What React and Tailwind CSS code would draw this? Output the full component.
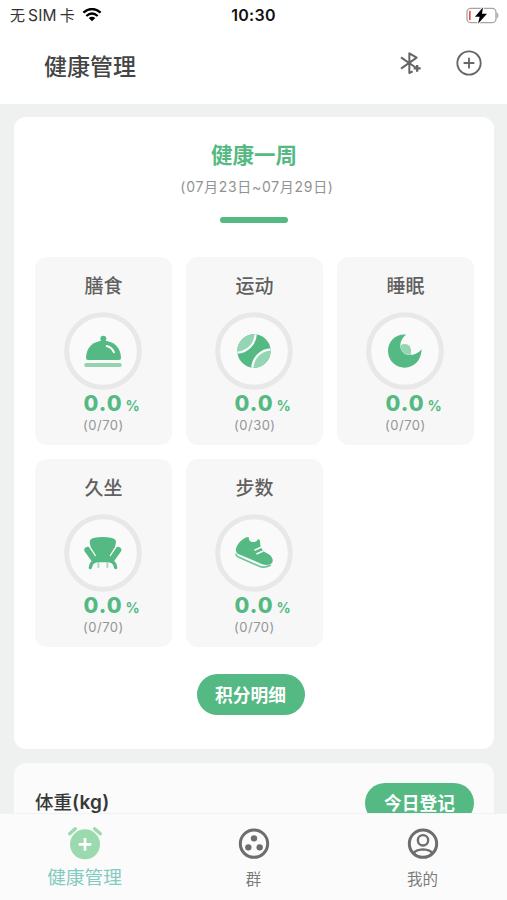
import { CirclePlus } from 'lucide-react';

const MealIcon = () => (
  <>
    <circle cx="118" cy="80" r="9" fill="#54b982" />
    <path d="M66 138 C66 105 90 86 118 86 C147 86 171 105 171 138 Q171 144 165 144 H72 Q66 144 66 138Z" fill="#54b982" />
    <path d="M128 102 Q144 106 150 121" fill="none" stroke="#fff" strokeWidth="6" strokeLinecap="round" />
    <rect x="61" y="153" width="112" height="12" rx="5" fill="#93d3af" />
  </>
);

const BallIcon = () => (
  <>
    <clipPath id="ball">
      <circle cx="117" cy="117" r="50" />
    </clipPath>
    <g clipPath="url(#ball)">
      <rect x="60" y="60" width="114" height="114" fill="#54b982" />
      <circle cx="64" cy="64" r="58" fill="#93d6b3" stroke="#fafafa" strokeWidth="7" />
      <circle cx="170" cy="170" r="58" fill="#93d6b3" stroke="#fafafa" strokeWidth="7" />
    </g>
  </>
);

const MoonIcon = () => (
  <>
    <path d="M120 68 C88 66 66 88 66 117 C66 147 90 167 116 167 C144 167 165 147 167 112 C153 130 125 135 112 122 C98 108 100 84 120 68Z" fill="#54b982" />
    <path d="M103 100 Q120 91 131 102 Q138 113 134 129 Q120 130 111 121 Q103 112 103 100Z" fill="#93d6b3" />
  </>
);

const ChairIcon = () => (
  <>
    <path d="M103 147 V160 M130 147 V160" stroke="#a9dcc0" strokeWidth="6" strokeLinecap="round" />
    <path d="M77 84 Q77 75 88 72 Q116 66 144 72 Q156 75 156 84 Q154 100 142 126 L148 138 Q146 145 138 145 H95 Q86 145 85 137 L93 126 Q79 104 77 84Z" fill="#54b982" />
    <path d="M70 108 L90 136 M163 108 L143 136" stroke="#54b982" strokeWidth="18" strokeLinecap="round" />
    <path d="M81 104 L94 125 M152 104 L139 125" stroke="#fafafa" strokeWidth="3.5" strokeLinecap="round" />
    <path d="M79 161 Q81 144 95 141 M155 161 Q153 144 139 141" fill="none" stroke="#54b982" strokeWidth="10" strokeLinecap="round" />
  </>
);

const ShoeIcon = () => (
  <>
    <path d="M85 75 Q94 68 101 69 Q101 83 111 84 Q125 86 129 76 L134 77 Q136 86 136 95 Q142 111 153 116 Q171 124 173 137 Q174 148 167 150 Q155 156 142 151 L68 119 Q61 114 63 104 Q68 86 85 75Z" fill="#54b982" />
    <path d="M120 108 L138 100 M126 119 L143 112" stroke="#fafafa" strokeWidth="5" strokeLinecap="round" />
    <path d="M63 121 Q64 126 70 129 L133 157 Q148 163 166 154" fill="none" stroke="#6cc595" strokeWidth="5" strokeLinecap="round" />
  </>
);

const tiles = [
  { title: '膳食', score: '(0/70)', Icon: MealIcon },
  { title: '运动', score: '(0/30)', Icon: BallIcon },
  { title: '睡眠', score: '(0/70)', Icon: MoonIcon },
  { title: '久坐', score: '(0/70)', Icon: ChairIcon },
  { title: '步数', score: '(0/70)', Icon: ShoeIcon },
];

const Tile = ({ title, score, Icon }) => (
  <div className="h-[188px] rounded-xl bg-[#f7f7f7] pt-4">
    <h3 className="pl-px text-center text-[19px] leading-7 font-medium text-[#606060]">{title}</h3>
    <svg viewBox="0 0 234 234" className="mx-auto mt-[11px] size-[78px]">
      <circle cx="117" cy="117" r="109" fill="#fafafa" stroke="#e8e8e8" strokeWidth="15" />
      <Icon />
    </svg>
    <div className="mt-[3px] flex items-baseline gap-[3px] pl-[49px] leading-5 text-[#54b982]">
      <span className="text-[21.5px] leading-5 font-extrabold tracking-[1px]">0.0</span>
      <span className="text-[14px] leading-5 font-bold">%</span>
    </div>
    <p className="pl-[48.5px] text-[13px] leading-[18px] tracking-[0.5px] text-[#959595]">{score}</p>
  </div>
);

const StatusBar = () => (
  <div className="flex h-[30px] items-center justify-between pr-[8px] pl-[10px] text-[#111]">
    <div className="flex w-[120px] items-center gap-[7px]">
      <span className="flex items-center gap-[3px] pt-px text-[15px] leading-5 whitespace-nowrap text-[#333]">
        无<span className="text-[15.5px] tracking-[0.2px]">SIM</span>卡
      </span>
      <svg viewBox="0 0 60 42" className="h-[14px] w-5">
        <path d="M30 40 L20 30 Q30 22 40 30Z" fill="#000" />
        <path d="M13 24 Q30 9 47 24 M4 14 Q30 -8 56 14" fill="none" stroke="#000" strokeWidth="7" />
      </svg>
    </div>
    <span className="mr-[2px] text-[16px] font-semibold tracking-[0.3px]">10:30</span>
    <div className="flex w-[120px] justify-end">
      <svg viewBox="0 0 99 51" className="h-[17px] w-[33px]">
        <rect x="3" y="4" width="87" height="43" rx="12" fill="none" stroke="#a5a5a5" strokeWidth="4" />
        <path d="M94 18 Q99 25 94 33Z" fill="#a5a5a5" stroke="#a5a5a5" strokeWidth="2" />
        <rect x="9" y="11" width="5" height="29" rx="2" fill="#ee5146" />
        <path d="M51 1 L27 29 H41 L36 50 L63 20 H48Z" fill="#000" stroke="#fff" strokeWidth="6" paintOrder="stroke" />
      </svg>
    </div>
  </div>
);

const NavItem = ({ label, children }) => (
  <div className="flex flex-1 flex-col items-center pt-3">
    <svg viewBox="0 0 108 102" className="h-[34px] w-9">{children}</svg>
    <span className="mt-2 text-[15.5px] leading-6 text-[#7b7b7b]">{label}</span>
  </div>
);

export default function App() {
  return (
    <div className="flex h-[900px] w-[507px] flex-col overflow-hidden bg-[#eff1f0] font-['Inter','Noto_Sans_CJK_SC',sans-serif]">
      <header className="h-[104px] shrink-0 bg-white">
        <StatusBar />
        <div className="flex items-center justify-between pr-[25px] pl-[44px]">
          <h1 className="mt-[19px] text-[23px] leading-9 font-medium text-[#444]">健康管理</h1>
          <div className="mt-[10px] flex items-center gap-[33px] text-[#666]">
            <svg viewBox="0 0 69 72" className="h-6 w-[23px]" fill="none" stroke="currentColor" strokeWidth="6">
              <path d="M6 19 L52 51 M6 53 L53 20 L31 7 V66 L41 61" strokeLinejoin="round" />
              <path d="M44 52 H65 M54.5 42 V62" strokeWidth="7" />
            </svg>
            <CirclePlus className="-mr-[1px] size-7" strokeWidth={1.6} />
          </div>
        </div>
      </header>

      <main className="min-h-0 flex-1 overflow-hidden px-[14px] pt-[13px]">
        <section className="h-[632px] w-[480px] rounded-xl bg-white px-[21px] pt-[22px]">
          <h2 className="text-center text-[21.5px] leading-8 font-bold text-[#54b982]">健康一周</h2>
          <p className="mt-[6px] pl-[6px] text-center text-[14px] leading-5 tracking-[0.7px] text-[#929292]">(07月23日~07月29日)</p>
          <div className="mx-auto mt-5 h-[6px] w-[68px] rounded-full bg-[#54b982]" />
          <div className="mt-[34px] grid grid-cols-[137px_137px_137px] gap-x-[14px] gap-y-[14px] -ml-[0.5px]">
            {tiles.map((tile) => (
              <Tile key={tile.title} {...tile} />
            ))}
          </div>
          <div className="mt-[27px] flex justify-center pr-[7px]">
            <button className="h-[41px] w-[108px] rounded-full bg-[#54b982] pt-[4px] text-[17.7px] font-bold text-white">积分明细</button>
          </div>
        </section>

        <section className="mt-[14px] flex h-[200px] w-[480px] items-start justify-between rounded-xl bg-[#fbfbfb] pt-5 pr-5 pl-[21px]">
          <h2 className="text-[18.5px] leading-[39px] font-medium text-[#383838]">
            体重<span className="text-[19px] font-semibold tracking-[0.3px]">(kg)</span>
          </h2>
          <button className="h-[40px] w-[109px] rounded-full bg-[#54b982] pt-[2px] text-[17.7px] font-bold text-white">今日登记</button>
        </section>
      </main>

      <nav className="flex h-[87px] shrink-0 border-t border-[#f1f2f2] bg-[#fbfbfb]">
        <div className="flex flex-1 flex-col items-center pt-[12px]">
          <svg viewBox="0 0 108 102" className="h-[34px] w-9">
            <circle cx="54" cy="55" r="45" fill="#9bd9ae" />
            <path d="M54 36 V74 M35 55 H73" stroke="#fff" strokeWidth="8" />
            <path d="M8 23 L25 8 M83 8 L100 23" stroke="#9bd9ae" strokeWidth="10" strokeLinecap="round" />
          </svg>
          <span className="mt-[5px] text-[18.7px] leading-[26px] text-[#83cabf]">健康管理</span>
        </div>
        <NavItem label="群">
          <circle cx="54" cy="53" r="41" fill="none" stroke="#6d6d6d" strokeWidth="9" />
          <g fill="#6d6d6d">
            <circle cx="54" cy="37" r="9.5" />
            <circle cx="37" cy="64" r="9.5" />
            <circle cx="71" cy="64" r="9.5" />
          </g>
        </NavItem>
        <NavItem label="我的">
          <g fill="none" stroke="#6d6d6d">
            <circle cx="54" cy="53" r="41" strokeWidth="9" />
            <circle cx="54" cy="43" r="15.5" strokeWidth="7" />
            <path d="M27 81 Q32 71 54 70 Q76 71 81 81" strokeWidth="7" />
          </g>
        </NavItem>
      </nav>
    </div>
  );
}
